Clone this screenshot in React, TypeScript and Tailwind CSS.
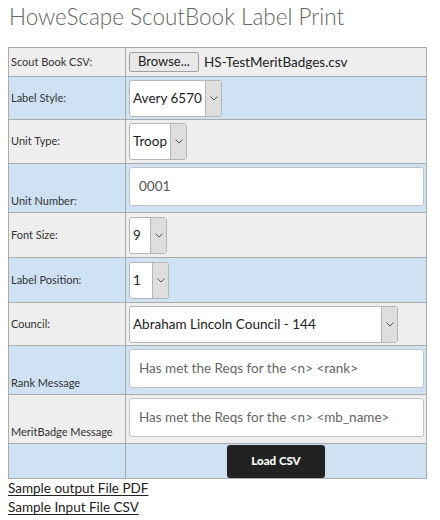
import { ReactNode } from "react";

const Chevron = () => (
  <svg width="8" height="5" viewBox="0 0 8 5" fill="none" stroke="#555" strokeWidth="1">
    <path d="M0.5 0.5 L4 4 L7.5 0.5" />
  </svg>
);

const Select = ({ value, className }: { value: string; className: string }) => (
  <div className={`flex h-[37px] rounded-[3px] border border-[#b5b5b5] bg-white ${className}`}>
    <div className="flex flex-1 items-center whitespace-nowrap pl-[3px] text-[13.5px] text-[#222]">{value}</div>
    <div className="flex w-[16px] items-center justify-center border-l border-[#b5b5b5] bg-[#dedede]">
      <Chevron />
    </div>
  </div>
);

const TextBox = ({ value, muted }: { value: string; muted?: boolean }) => (
  <div
    className={`mb-[6px] flex h-[39px] w-[295px] items-center whitespace-nowrap rounded-[3px] border border-[#c4c4c4] bg-white pl-[9px] text-[13.5px] ${
      muted ? "text-[#666]" : "text-[#555]"
    }`}
  >
    {value}
  </div>
);

const Row = ({
  label,
  children,
  blue,
  h,
  bottom,
}: {
  label: string;
  children?: ReactNode;
  blue?: boolean;
  h: string;
  bottom?: boolean;
}) => (
  <div className={`flex border-b border-[#ababab] ${blue ? "bg-[#cfe2f3]" : "bg-[#eeeeee]"} ${h}`}>
    <div
      className={`flex w-[117px] shrink-0 border-r border-[#ababab] pl-[2px] text-[11px] text-[#333] ${
        bottom ? "items-end pb-[3px]" : "items-center"
      }`}
    >
      {label}
    </div>
    <div className={`flex flex-1 pl-[3px] ${bottom ? "items-end" : "items-center"}`}>{children}</div>
  </div>
);

export default function App() {
  return (
    <div className="h-[520px] w-[440px] bg-white font-['Lato',sans-serif]">
      <h1 className="pl-[9px] pt-[3px] text-[22.5px] font-light leading-[28px] text-[#666]">
        HoweScape ScoutBook Label Print
      </h1>

      <div className="ml-[8px] mt-[16px] w-[419px] border border-b-0 border-[#ababab]">
        <Row label="Scout Book CSV:" h="h-[29px]">
          <div className="flex items-center gap-[5px]">
            <div className="flex h-[20px] w-[70px] items-center justify-center rounded-[2px] border border-[#a0a0a0] bg-[#e9e9e9] text-[13px] text-[#222]">
              Browse...
            </div>
            <span className="text-[13.5px] text-[#222]">HS-TestMeritBadges.csv</span>
          </div>
        </Row>
        <Row label="Label Style:" blue h="h-[43px]">
          <Select value="Avery 6570" className="w-[93px]" />
        </Row>
        <Row label="Unit Type:" h="h-[44px]">
          <Select value="Troop" className="w-[58px]" />
        </Row>
        <Row label="Unit Number:" blue bottom h="h-[49px]">
          <TextBox value="0001" />
        </Row>
        <Row label="Font Size:" h="h-[45px]">
          <Select value="9" className="w-[38px]" />
        </Row>
        <Row label="Label Position:" blue h="h-[45px]">
          <Select value="1" className="w-[40px]" />
        </Row>
        <Row label="Council:" h="h-[43px]">
          <Select value="Abraham Lincoln Council - 144" className="w-[269px]" />
        </Row>
        <Row label="Rank Message" blue bottom h="h-[49px]">
          <TextBox value="Has met the Reqs for the <n> <rank>" muted />
        </Row>
        <Row label="MeritBadge Message" bottom h="h-[49px]">
          <TextBox value="Has met the Reqs for the <n> <mb_name>" muted />
        </Row>
        <Row label="" blue h="h-[35px]">
          <div className="flex flex-1 justify-center pr-[3px]">
            <button className="h-[33px] w-[98px] rounded-[3px] bg-[#222] text-[11.5px] font-black text-white">
              Load CSV
            </button>
          </div>
        </Row>
      </div>

      <div className="flex flex-col pl-[8px] text-[13.5px] leading-[19px] text-[#222]">
        <a className="self-start underline underline-offset-2">Sample output File PDF</a>
        <a className="self-start underline underline-offset-2">Sample Input File CSV</a>
      </div>
    </div>
  );
}
